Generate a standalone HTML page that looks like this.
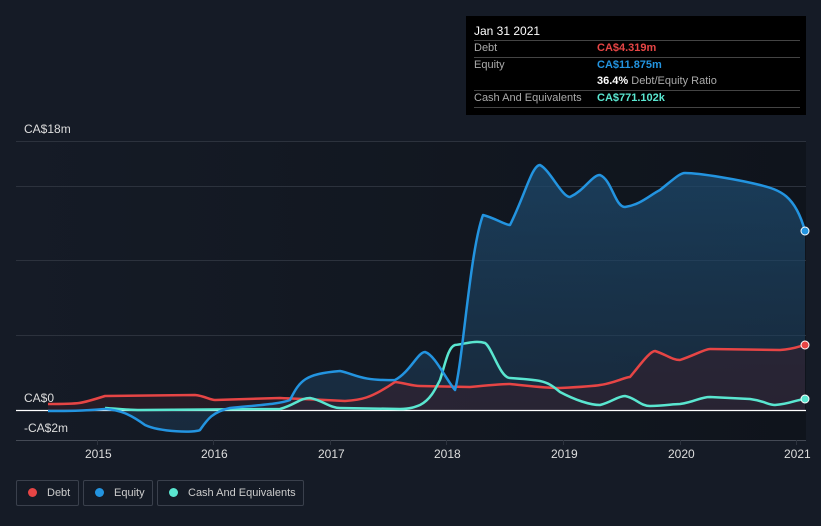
<!DOCTYPE html>
<html><head><style>
body{margin:0;background:#151b26;font-family:"Liberation Sans",sans-serif;width:821px;height:526px;overflow:hidden;position:relative}
.tip{position:absolute;left:466px;top:16px;width:340px;height:99px;background:#000;color:#fff;font-size:11px}
.row{position:absolute;left:8px;width:326px;border-top:1px solid #444}
.lab{position:absolute;left:8px;color:#aaa}
.val{position:absolute;left:131px;font-weight:bold;white-space:nowrap}
.leg{position:absolute;top:480px;height:26px;border:1px solid #3a404c;border-radius:2px;color:#ccc;font-size:11px;line-height:24px;box-sizing:border-box;white-space:nowrap}
.leg i{display:inline-block;width:9px;height:9px;border-radius:50%;margin:0 10px 0 11px;vertical-align:-1px}
.ax{position:absolute;color:#ddd;font-size:12px}
</style></head><body>
<svg width="821" height="526" style="position:absolute;left:0;top:0">
<defs>
<linearGradient id="bg" x1="0" x2="1"><stop offset="0" stop-color="#151b26"/><stop offset="1" stop-color="#0f141c"/></linearGradient>
<linearGradient id="eq" x1="0" y1="0" x2="0" y2="1"><stop offset="0" stop-color="#1d4a6e" stop-opacity=".75"/><stop offset="1" stop-color="#1d3a55" stop-opacity=".5"/></linearGradient>
</defs>
<rect x="16" y="141" width="790" height="300" fill="url(#bg)"/>
<g stroke="#2c323d" stroke-width="1">
<line x1="16" y1="141.5" x2="806" y2="141.5"/><line x1="16" y1="186.5" x2="806" y2="186.5"/>
<line x1="16" y1="260.5" x2="806" y2="260.5"/><line x1="16" y1="335.5" x2="806" y2="335.5"/>
<line x1="16" y1="440.5" x2="806" y2="440.5" stroke="#444a55"/>
<line x1="97.5" y1="440" x2="97.5" y2="445"/><line x1="213.5" y1="440" x2="213.5" y2="445"/><line x1="330.5" y1="440" x2="330.5" y2="445"/><line x1="446.5" y1="440" x2="446.5" y2="445"/><line x1="563.5" y1="440" x2="563.5" y2="445"/><line x1="680.5" y1="440" x2="680.5" y2="445"/><line x1="796.5" y1="440" x2="796.5" y2="445"/>
</g>
<path d="M48,411 C70,411 80,411 105,409 C120,410 130,414 145,425 C160,432 195,433 200,430 C207,420 212,412 230,408 C260,405 280,404 290,400 C300,380 305,374 340,371 C355,374 360,381 395,380 C410,372 418,352 425,352 C435,355 445,378 455,390 C463,360 470,250 483,215 C495,218 505,225 510,225 C525,195 532,165 540,165 C550,170 562,197 570,197 C585,190 592,175 600,175 C612,180 615,207 625,207 C640,205 650,195 660,190 C675,178 680,173 685,173 C700,173 740,180 760,185 C780,190 795,195 805,231 L805,410 L48,410Z" fill="url(#eq)"/>
<path d="M48,404 C80,404 80,404 105,396 L195,395 C205,396 210,400 215,400 L280,398 C300,399 310,399 345,401 C360,400 370,399 395,382 C405,383 412,386 420,386 L470,387 C490,385 500,384 510,384 C530,386 545,388 560,388 C580,387 595,386 600,385 C615,383 625,377 630,377 C640,365 650,351 655,351 C665,354 672,360 680,360 C695,355 705,349 710,349 L780,350 C795,349 800,346 805,345 L805,410 L48,410Z" fill="#3a1e2a" fill-opacity=".5"/>
<line x1="16" y1="410.5" x2="806" y2="410.5" stroke="#fff" stroke-width="1.3"/>
<g fill="none" stroke-width="2.5" stroke-linejoin="round">
<path stroke="#e64545" d="M48,404 C80,404 80,404 105,396 L195,395 C205,396 210,400 215,400 L280,398 C300,399 310,399 345,401 C360,400 370,399 395,382 C405,383 412,386 420,386 L470,387 C490,385 500,384 510,384 C530,386 545,388 560,388 C580,387 595,386 600,385 C615,383 625,377 630,377 C640,365 650,351 655,351 C665,354 672,360 680,360 C695,355 705,349 710,349 L780,350 C795,349 800,346 805,345"/>
<path stroke="#5ae6d0" d="M105,408 C120,409 130,410 140,410 L280,409 C295,405 300,398 310,398 C322,400 330,408 340,408 L400,409 C410,409 415,407 420,405 C430,400 435,390 440,380 C445,365 448,347 455,345 C465,344 475,340 485,343 C492,347 500,378 510,378 C525,379 535,380 540,381 C550,383 555,388 560,392 C575,400 590,405 600,405 C612,402 618,396 625,396 C636,398 640,406 650,406 C665,406 672,404 680,404 C695,402 700,397 710,397 L750,399 C765,401 768,405 775,405 C790,404 795,400 805,399"/>
<path stroke="#2394e0" d="M48,411 C70,411 80,411 105,409 C120,410 130,414 145,425 C160,432 195,433 200,430 C207,420 212,412 230,408 C260,405 280,404 290,400 C300,380 305,374 340,371 C355,374 360,381 395,380 C410,372 418,352 425,352 C435,355 445,378 455,390 C463,360 470,250 483,215 C495,218 505,225 510,225 C525,195 532,165 540,165 C550,170 562,197 570,197 C585,190 592,175 600,175 C612,180 615,207 625,207 C640,205 650,195 660,190 C675,178 680,173 685,173 C700,173 740,180 760,185 C780,190 795,195 805,231"/>
</g>
<circle cx="805" cy="231" r="4" fill="#2394e0" stroke="#fff" stroke-width="1"/>
<circle cx="805" cy="345" r="4" fill="#e64545" stroke="#fff" stroke-width="1"/>
<circle cx="805" cy="399" r="4" fill="#5ae6d0" stroke="#fff" stroke-width="1"/>
</svg>
<div class="ax" style="left:24px;top:122px">CA$18m</div>
<div class="ax" style="left:24px;top:391px">CA$0</div>
<div class="ax" style="left:24px;top:421px">-CA$2m</div>
<div class="ax" style="left:85px;top:447px">2015</div>
<div class="ax" style="left:201px;top:447px">2016</div>
<div class="ax" style="left:318px;top:447px">2017</div>
<div class="ax" style="left:434px;top:447px">2018</div>
<div class="ax" style="left:551px;top:447px">2019</div>
<div class="ax" style="left:668px;top:447px">2020</div>
<div class="ax" style="left:784px;top:447px">2021</div>
<div class="tip">
<div style="position:absolute;left:8px;top:8px;font-size:12px">Jan 31 2021</div>
<div class="row" style="top:24px"></div>
<div class="lab" style="top:26px">Debt</div><div class="val" style="top:26px;color:#e64545">CA$4.319m</div>
<div class="row" style="top:41px"></div>
<div class="lab" style="top:43px">Equity</div><div class="val" style="top:43px;color:#2394e0">CA$11.875m</div>
<div class="val" style="top:59px;color:#fff">36.4% <span style="color:#aaa;font-weight:normal">Debt/Equity Ratio</span></div>
<div class="row" style="top:74px"></div>
<div class="lab" style="top:76px">Cash And Equivalents</div><div class="val" style="top:76px;color:#5ae6d0">CA$771.102k</div>
<div class="row" style="top:91px"></div>
</div>
<div class="leg" style="left:16px;width:63px"><i style="background:#e64545"></i>Debt</div>
<div class="leg" style="left:83px;width:70px"><i style="background:#2394e0"></i>Equity</div>
<div class="leg" style="left:157px;width:147px"><i style="background:#5ae6d0"></i>Cash And Equivalents</div>
</body></html>
